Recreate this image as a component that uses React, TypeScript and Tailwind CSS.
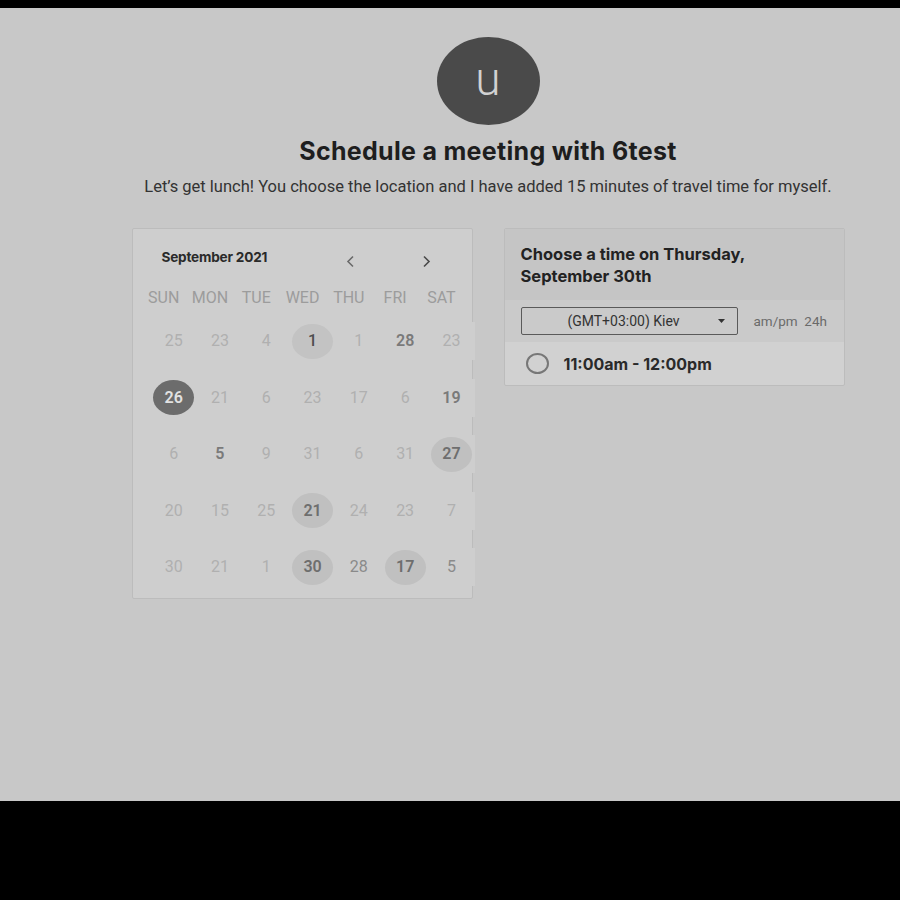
import React from 'react';

type Kind = 'dim' | 'mid' | 'bold' | 'circ' | 'today' | 'sel';

const weekdays = ['SUN', 'MON', 'TUE', 'WED', 'THU', 'FRI', 'SAT'];

const weeks: [string, Kind][][] = [
  [['25', 'dim'], ['23', 'dim'], ['4', 'dim'], ['1', 'today'], ['1', 'dim'], ['28', 'bold'], ['23', 'dim']],
  [['26', 'sel'], ['21', 'dim'], ['6', 'dim'], ['23', 'dim'], ['17', 'dim'], ['6', 'dim'], ['19', 'bold']],
  [['6', 'dim'], ['5', 'bold'], ['9', 'dim'], ['31', 'dim'], ['6', 'dim'], ['31', 'dim'], ['27', 'circ']],
  [['20', 'dim'], ['15', 'dim'], ['25', 'dim'], ['21', 'circ'], ['24', 'dim'], ['23', 'dim'], ['7', 'dim']],
  [['30', 'dim'], ['21', 'dim'], ['1', 'dim'], ['30', 'circ'], ['28', 'mid'], ['17', 'circ'], ['5', 'mid']],
];

const dayClass: Record<Kind, string> = {
  dim: 'text-[#b0b0b0]',
  mid: 'text-[#8a8a8a]',
  bold: 'text-[#7a7a7a] font-semibold',
  circ: 'bg-[#c0c0c0] text-[#6e6e6e] font-semibold',
  today: 'bg-[#c3c3c3] text-[#4e4e4e] font-medium',
  sel: 'bg-[#6c6c6c] text-[#e2e2e2] font-semibold',
};

const Chevron = ({ dir, color }: { dir: 'left' | 'right'; color: string }) => (
  <svg width="9" height="13" viewBox="0 0 9 13" fill="none" stroke={color} strokeWidth="1.6">
    {dir === 'left' ? <path d="M7 1.5 L2 6.5 L7 11.5" /> : <path d="M2 1.5 L7 6.5 L2 11.5" />}
  </svg>
);

const Calendar = () => (
  <div className="w-[341px] h-[371px] bg-[#cecece] border border-[#bcbcbc] rounded-[2px] font-['Roboto',sans-serif]">
    <div className="flex items-center h-[56px] pl-[29px] pt-[1px]">
      <span className="font-['Inter',sans-serif] font-bold text-[13.6px] text-[#2a2a2a] tracking-[-0.2px] w-[184px]">
        September 2021
      </span>
      <span className="w-[9px] mt-[7px]">
        <Chevron dir="left" color="#6a6a6a" />
      </span>
      <span className="w-[9px] ml-[67px] mt-[7px]">
        <Chevron dir="right" color="#4a4a4a" />
      </span>
    </div>
    <div className="grid grid-cols-[repeat(7,46.3px)] ml-[8px] h-[26px] items-center">
      {weekdays.map((d) => (
        <span key={d} className="text-center text-[16px] text-[#9c9c9c]">
          {d}
        </span>
      ))}
    </div>
    <div className="flex flex-col mt-[2px]">
      {weeks.map((w, i) => (
        <div key={i} className="flex items-center h-[56.5px]">
          <div className="grid grid-cols-[repeat(7,46.3px)] ml-[18px] w-[325px] h-[38px] items-center bg-[#cecece] relative">
            {w.map(([n, k], j) => (
              <div key={j} className="flex justify-center">
                <span
                  className={`w-[41px] h-[35px] rounded-[50%] flex items-center justify-center text-[16px] ${dayClass[k]}`}
                >
                  {n}
                </span>
              </div>
            ))}
          </div>
        </div>
      ))}
    </div>
  </div>
);

const TimePanel = () => (
  <div className="w-[341px] bg-[#d1d1d1] border border-[#bcbcbc] rounded-[2px] overflow-hidden">
    <div className="bg-[#c5c5c5] h-[71px] px-[16px] pt-[14px] font-['Inter',sans-serif] font-bold text-[16.5px] leading-[22px] text-[#222]">
      Choose a time on Thursday,
      <br />
      September 30th
    </div>
    <div className="bg-[#cacaca] h-[42px] flex items-center pl-[16px] font-['Roboto',sans-serif]">
      <div className="w-[217px] h-[28px] border border-[#5a5a5a] rounded-[2px] flex items-center text-[14px] text-[#333]">
        <span className="flex-1 text-center pl-[8px]">(GMT+03:00) Kiev</span>
        <svg width="7" height="4" viewBox="0 0 7 4" className="mr-[12px]">
          <path d="M0 0 H7 L3.5 4 Z" fill="#333" />
        </svg>
      </div>
      <span className="ml-[16px] text-[13.5px] text-[#6a6a6a] whitespace-pre">am/pm  24h</span>
    </div>
    <div className="h-[43px] flex items-center pl-[21px]">
      <span className="w-[23px] h-[21px] rounded-[50%] border-2 border-[#777]" />
      <span className="ml-[15px] font-['Inter',sans-serif] font-bold text-[16px] text-[#2a2a2a]">
        11:00am - 12:00pm
      </span>
    </div>
  </div>
);

export default function App() {
  return (
    <div className="w-[900px] h-[900px] bg-black pt-[8px]">
      <div className="h-[793px] bg-[#c8c8c8] pl-[76px] flex flex-col items-center">
        <div className="mt-[29px] w-[103px] h-[88px] rounded-[50%] bg-[#4a4a4a] flex items-center justify-center">
          <span className="font-['Roboto',sans-serif] font-light text-[46px] leading-none text-[#d2d2d2] -mt-[4px]">u</span>
        </div>
        <h1 className="mt-[12px] font-['Inter',sans-serif] font-bold text-[25px] leading-[28px] text-[#1e1e1e] tracking-[0.3px]">
          Schedule a meeting with 6test
        </h1>
        <p className="mt-[12px] font-['Roboto',sans-serif] text-[16.5px] leading-[20px] text-[#333]">
          Let’s get lunch! You choose the location and I have added 15 minutes of travel time for myself.
        </p>
        <div className="mt-[31px] flex gap-[31px] items-start">
          <Calendar />
          <TimePanel />
        </div>
      </div>
    </div>
  );
}
